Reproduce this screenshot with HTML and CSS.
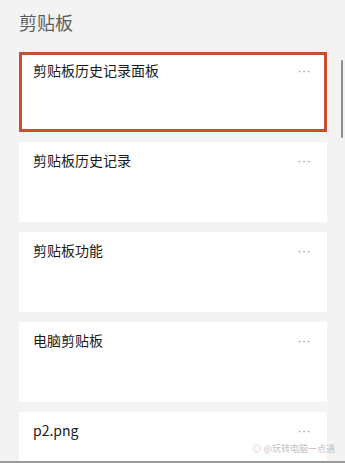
FILE: index.html
```html
<!DOCTYPE html>
<html lang="zh-CN">
<head>
  <meta charset="UTF-8">
  <meta name="viewport" content="width=device-width, initial-scale=1.0">
  <title>剪贴板</title>
  <link rel="stylesheet" href="styles.css">
</head>

<body>
  <div class="page">
    <h1>剪贴板</h1>

    <div class="list">
      <div class="card active">
        <span class="name">剪贴板历史记录面板</span>
        <span class="more">···</span>
      </div>
      <div class="card">
        <span class="name">剪贴板历史记录</span>
        <span class="more">···</span>
      </div>
      <div class="card">
        <span class="name">剪贴板功能</span>
        <span class="more">···</span>
      </div>
      <div class="card">
        <span class="name">电脑剪贴板</span>
        <span class="more">···</span>
      </div>
      <div class="card">
        <span class="name">p2.png</span>
        <span class="more">···</span>
      </div>
    </div>

    <div class="scrollbar"></div>
    <div class="mark">◎ @玩转电脑一点通</div>
    <div class="bottom-line"></div>
  </div>
</body>
</html>
```

FILE: styles.css
```css
* {
  box-sizing: border-box;
}

html, body {
  margin: 0;
  padding: 0;
  height: 100%;
  overflow: hidden;
}

body {
  font-family: "Noto Sans CJK SC", "Liberation Sans", sans-serif;
  background: #f3f3f3;
  color: #1a1a1a;
}

.page {
  position: relative;
  height: 463px;
  overflow: hidden;
  padding: 11px 18px 0 19px;
}

h1 {
  margin: 0 0 18px;
  font-size: 18px;
  font-weight: 400;
  line-height: 23px;
  color: #5c5c5c;
}

.list {
  display: flex;
  flex-direction: column;
  gap: 10px;
  width: 308px;
}

.card {
  display: flex;
  justify-content: space-between;
  align-items: flex-start;
  flex-shrink: 0;
  height: 80px;
  background: #fff;
  padding: 8px 16px 0 14px;
}

.card.active {
  border: 3px solid #c5502e;
  padding: 5px 13px 0 11px;
}

.name {
  font-size: 14px;
  line-height: 20px;
}

.more {
  font-family: "Liberation Sans", sans-serif;
  font-size: 12px;
  line-height: 12px;
  margin-top: 5px;
  color: #8a8a8a;
  letter-spacing: 0.5px;
}

.scrollbar {
  position: absolute;
  top: 60px;
  left: 341px;
  width: 2px;
  height: 78px;
  background: #8c8c8c;
  border-radius: 1px;
}

.mark {
  position: absolute;
  right: 10px;
  bottom: 8px;
  font-size: 9px;
  color: #c2c2c2;
}

.bottom-line {
  position: absolute;
  left: 0;
  right: 0;
  bottom: 0;
  height: 2px;
  background: #9a9a9a;
}
```
